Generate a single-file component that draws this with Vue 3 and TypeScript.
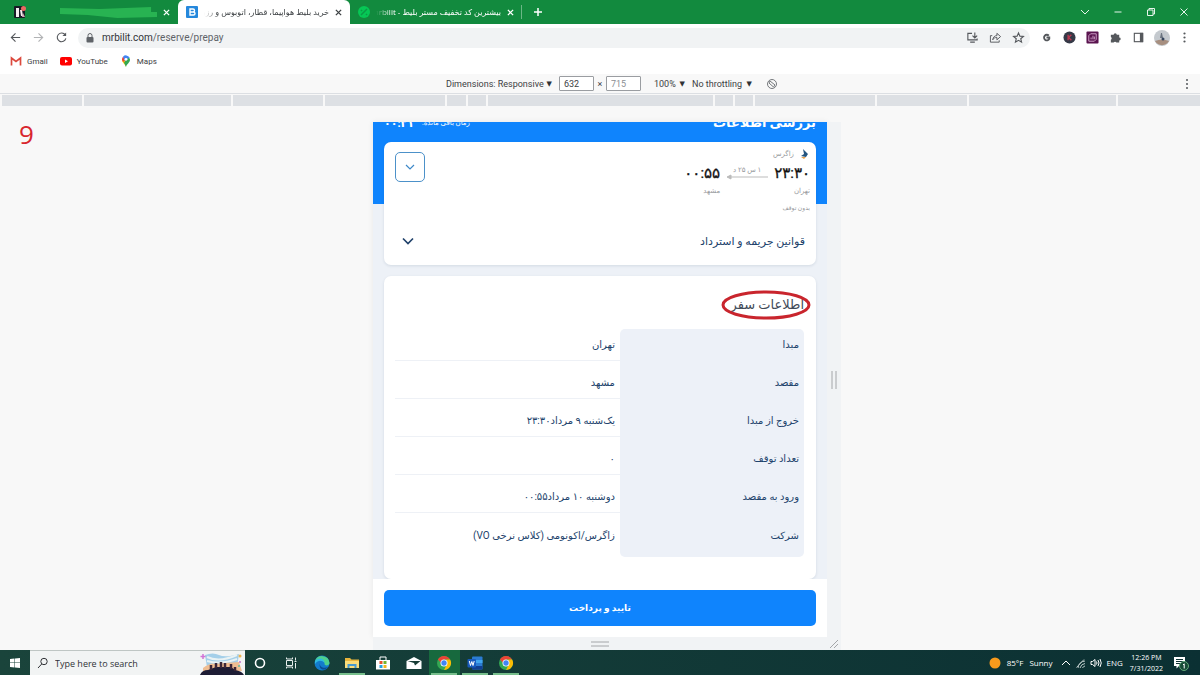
<script setup lang="ts">
import { ref } from 'vue'

interface TripRow {
  label: string
  value: string
}

const rows: TripRow[] = [
  { label: 'مبدا', value: 'تهران' },
  { label: 'مقصد', value: 'مشهد' },
  { label: 'خروج از مبدا', value: 'یک‌شنبه ۹ مرداد۲۳:۳۰' },
  { label: 'تعداد توقف', value: '۰' },
  { label: 'ورود به مقصد', value: 'دوشنبه ۱۰ مرداد۰۰:۵۵' },
  { label: 'شرکت', value: 'زاگرس/اکونومی (کلاس نرخی VO)' },
]

const breakpoints: number[] = [82, 150, 92, 123, 19, 19, 229, 19, 18, 123, 92, 150, 84]

const address = ref('mrbilit.com')
const width = ref('632')
const height = ref('715')
const query = ref('')
</script>

<template>
  <div class="desktop">
    <header class="tabs">
      <div class="tab first">
        <svg class="fav" viewBox="0 0 14 14" aria-hidden="true">
          <rect x="1" y="1" width="11" height="12" rx="1" fill="#171a25" />
          <path d="M3 3h3v9H3zM7 5l2 0 1 6H8z" fill="#f5f0f2" />
          <circle cx="10.500" cy="3.500" r="2.500" fill="#e86b62" />
          <path d="M10 8l2 4H9z" fill="#d4a6b5" />
        </svg>
        <svg class="scribble" viewBox="0 0 100 12" preserveAspectRatio="none" aria-hidden="true">
          <path d="M1 2l40 1 52-2v5h6v5l-40 1-30-3L1 8z" fill="#28b352" />
        </svg>
        <button class="close" aria-label="Close tab">
          <svg viewBox="0 0 8 8"><path d="M1 1l6 6M7 1L1 7" /></svg>
        </button>
      </div>
      <div class="tab active">
        <svg class="fav" viewBox="0 0 14 14" aria-hidden="true">
          <rect x="1" y="1" width="12" height="12" rx="1" fill="#2588dc" />
          <path d="M5 4h3a1.500 1.500 0 0 1 0 3H5zM5 7h3.500a1.500 1.500 0 0 1 0 3H5z" fill="none" stroke="#fff" stroke-width="1.400" />
        </svg>
        <span class="title" dir="rtl">خرید بلیط هواپیما، قطار، اتوبوس و رزرو</span>
        <button class="close" aria-label="Close tab">
          <svg viewBox="0 0 8 8"><path d="M1 1l6 6M7 1L1 7" /></svg>
        </button>
      </div>
      <div class="tab last">
        <svg class="fav" viewBox="0 0 14 14" aria-hidden="true">
          <circle cx="7" cy="7" r="6" fill="#06c755" />
          <path d="M4 10l6-6M4 5l1 1M9 9l1 1" stroke="#0a9a46" stroke-width="1.500" />
        </svg>
        <span class="title" dir="rtl">بیشترین کد تخفیف مستر بلیط - mrbilit</span>
        <button class="close" aria-label="Close tab">
          <svg viewBox="0 0 8 8"><path d="M1 1l6 6M7 1L1 7" /></svg>
        </button>
      </div>
      <button class="new-tab" aria-label="New tab">
        <svg viewBox="0 0 10 10"><path d="M5 1v8M1 5h8" /></svg>
      </button>
      <div class="window-controls">
        <button aria-label="Search tabs"><svg viewBox="0 0 12 12"><path d="M2 4l4 4 4-4" /></svg></button>
        <button aria-label="Minimize"><svg viewBox="0 0 12 12"><path d="M2.500 6h7" /></svg></button>
        <button aria-label="Restore"><svg viewBox="0 0 12 12"><path d="M2.500 4h5.500v5.500H2.500zM4 4V2.500h5.500V8H8" /></svg></button>
        <button aria-label="Close window"><svg viewBox="0 0 12 12"><path d="M2.500 2.500l7 7M9.500 2.500l-7 7" /></svg></button>
      </div>
    </header>

    <nav class="toolbar">
      <button class="tool" aria-label="Back"><svg viewBox="0 0 14 14"><path d="M12 7H2.500M7 2.500L2.500 7 7 11.500" /></svg></button>
      <button class="tool faded" aria-label="Forward"><svg viewBox="0 0 14 14"><path d="M2 7h9.500M7 2.500L11.500 7 7 11.500" /></svg></button>
      <button class="tool" aria-label="Reload"><svg viewBox="0 0 14 14"><path d="M11 4.200A4.700 4.700 0 1 0 11.700 8" /><path d="M12 1.500v4H8z" fill="#55585c" stroke="none" /></svg></button>
      <div class="address">
        <svg class="lock" viewBox="0 0 10 12" aria-hidden="true"><rect x="1.500" y="5" width="7" height="5.500" rx="1" fill="#5f6368" /><path d="M3 5V3.500a2 2 0 0 1 4 0V5" fill="none" stroke="#5f6368" /></svg>
        <a class="url" href="#" :aria-label="address">{{ address }}<span>/reserve/prepay</span></a>
        <button class="tool" aria-label="Install app"><svg viewBox="0 0 14 14"><path d="M6.500 2.500H2v7h10V8M4.500 12h5M9.500 1.500v5.500M7 5l2.500 2.500L12 5" /></svg></button>
        <button class="tool" aria-label="Share"><svg viewBox="0 0 14 14"><path d="M3.500 5H1.500v7h9.500V10M4 9.500c.5-3 2-4.500 4.500-4.500V2.500l4 3.500-4 3.500V7C6.500 7 5 7.500 4 9.500z" stroke-width="1" /></svg></button>
        <button class="tool" aria-label="Bookmark"><svg viewBox="0 0 14 14"><path d="M7 2l1.500 3.500 3.800.300-2.900 2.500.900 3.700L7 10l-3.300 2 .900-3.700-2.900-2.500 3.800-.300z" /></svg></button>
      </div>
      <button class="tool" aria-label="Grammar extension"><svg viewBox="0 0 14 14"><path d="M9.500 5A3 3 0 1 0 10 8.500V7H7" stroke-width="2" /></svg></button>
      <button class="tool" aria-label="Keyword extension"><svg viewBox="0 0 14 14"><circle cx="7" cy="7" r="6.500" fill="#353947" stroke="none" /><path d="M5.500 4v6M9 4L6 7l3 3" stroke="#b93850" stroke-width="1.500" /></svg></button>
      <button class="tool" aria-label="Statistics extension"><svg viewBox="0 0 14 14"><rect x="0.500" y="0.500" width="13" height="13" rx="1" fill="#5a144f" stroke="none" /><path d="M3 11V5l2-2h6v6l-2 2zM5.500 9V7M7.500 9V5M9 9V6" stroke="#d5a9ce" stroke-width="1" /></svg></button>
      <button class="tool" aria-label="Extensions"><svg viewBox="0 0 14 14"><path d="M2 4h3a1.700 1.700 0 1 1 3.400 0H11v3a1.600 1.600 0 1 1 0 3.200V12.500H8a1.700 1.700 0 0 0-3 0H2V9.500a1.700 1.700 0 0 0 0-3z" fill="#55585c" stroke="none" /></svg></button>
      <button class="tool" aria-label="Side panel"><svg viewBox="0 0 14 14"><rect x="2.500" y="2.500" width="9" height="9" /><path d="M8.500 2h3.500v10H8.500z" fill="#55585c" stroke="none" /></svg></button>
      <button class="tool" aria-label="Profile"><svg class="avatar" viewBox="0 0 16 16"><circle cx="8" cy="8" r="8" fill="#c4c9ce" /><path d="M1 11q7-3 14 0a8 8 0 0 1-14 0z" fill="#a78f80" /><path d="M7 3h1l1 5H6z" fill="#6b7480" /><circle cx="9" cy="9" r="1.500" fill="#34445c" /></svg></button>
      <button class="tool" aria-label="Chrome menu"><svg viewBox="0 0 14 14"><g fill="#55585c" stroke="none"><circle cx="7" cy="2.700" r="1.200" /><circle cx="7" cy="7" r="1.200" /><circle cx="7" cy="11.300" r="1.200" /></g></svg></button>
    </nav>

    <nav class="bookmarks">
      <a href="#"><svg viewBox="0 0 12 12" aria-hidden="true"><path d="M1.500 10.500V3L6 6.500 10.500 3v7.500" fill="none" stroke="#dc4a3e" stroke-width="1.700" /></svg>Gmail</a>
      <a href="#"><svg viewBox="0 0 12 12" aria-hidden="true"><rect y="2" width="12" height="8.500" rx="2" fill="#f00" /><path d="M5 4.500v3.500l3-1.700z" fill="#fff" /></svg>YouTube</a>
      <a href="#"><svg viewBox="0 0 12 12" aria-hidden="true"><path d="M6 12C5.500 9 2 8 2 4.500L6 4z" fill="#fbbc04" /><path d="M6 12c.500-3 4-4 4-7.500L9 2 4 7.500z" fill="#34a853" /><path d="M2 4.500a4 4 0 0 1 1-2.800L6 4 3 7z" fill="#ea4335" /><path d="M3 1.700A4 4 0 0 1 9.500 2.500L5 6z" fill="#4285f4" /><circle cx="6" cy="4.300" r="1.400" fill="#fff" /></svg>Maps</a>
    </nav>

    <section class="device-bar">
      <div class="device-controls">
        <label class="pick dimensions"><select aria-label="Dimensions"><option>Dimensions: Responsive</option></select><i>▼</i></label>
        <input v-model="width" aria-label="Width" />
        <span class="times">×</span>
        <input v-model="height" class="muted" aria-label="Height" />
        <label class="pick zoom"><select aria-label="Zoom"><option>100%</option></select><i>▼</i></label>
        <label class="pick throttle"><select aria-label="Throttling"><option>No throttling</option></select><i>▼</i></label>
        <button aria-label="Rotate"><svg viewBox="0 0 12 12"><circle cx="6" cy="6" r="4.500" /><path d="M4 3l5 4-1.500 2L3 5z" /></svg></button>
      </div>
      <button class="more" aria-label="More options"><svg viewBox="0 0 12 12"><g fill="#55585c" stroke="none"><circle cx="6" cy="2" r="1" /><circle cx="6" cy="6" r="1" /><circle cx="6" cy="10" r="1" /></g></svg></button>
    </section>

    <div class="ruler"><span v-for="(size, i) in breakpoints" :key="i" :style="{ flexGrow: size }"></span></div>

    <main class="stage">
      <div class="step">9</div>
      <div class="device" dir="rtl">
        <div class="screen">
          <div class="page-head">
            <h1>بررسی اطلاعات</h1>
            <p>زمان باقی مانده: <b>۰۰:۲۱</b></p>
          </div>
          <section class="card flight">
            <div class="flight-top">
              <div>
                <div class="airline">
                  <svg viewBox="0 0 12 12" aria-hidden="true"><path d="M5 1l5 5-2 3-5-1 3-2z" fill="#245580" /><path d="M3 9h5l-2 2z" fill="#e5a04a" /></svg>
                  زاگرس
                </div>
                <div class="route">
                  <time>۲۳:۳۰</time>
                  <div class="duration">
                    <span>۱ س ۲۵ د</span>
                    <svg viewBox="0 0 42 6" aria-hidden="true"><path d="M42 2H2M5 0L1 2l4 2z" /></svg>
                  </div>
                  <time>۰۰:۵۵</time>
                  <span class="city">تهران</span>
                  <span></span>
                  <span class="city">مشهد</span>
                </div>
                <div class="stops">بدون توقف</div>
              </div>
              <button class="toggle" aria-label="جزئیات"><svg viewBox="0 0 12 12"><path d="M2 4l4 4 4-4" /></svg></button>
            </div>
            <button class="rules">قوانین جریمه و استرداد
              <svg viewBox="0 0 12 12" aria-hidden="true"><path d="M1 3.500l5 5 5-5" /></svg>
            </button>
          </section>
          <section class="card trip">
            <h2>
              اطلاعات سفر
              <svg class="mark" viewBox="0 0 90 30" aria-hidden="true"><ellipse cx="45" cy="15" rx="43" ry="13" /></svg>
            </h2>
            <table>
              <tbody>
                <tr v-for="row in rows" :key="row.label">
                  <th scope="row">{{ row.label }}</th>
                  <td>{{ row.value }}</td>
                </tr>
              </tbody>
            </table>
          </section>
        </div>
        <div class="pay"><button>تایید و پرداخت</button></div>
      </div>
      <div class="grip-side"><svg viewBox="0 0 6 20" aria-hidden="true"><path d="M1 1v18M5 1v18" /></svg></div>
      <div class="grip-bottom">
        <svg viewBox="0 0 20 6" aria-hidden="true"><path d="M1 1h18M1 5h18" /></svg>
      </div>
      <div class="grip-corner">
        <svg viewBox="0 0 10 10" aria-hidden="true"><path d="M1 9l8-8M5 9l4-4" /></svg>
      </div>
    </main>

    <footer class="taskbar">
      <button class="start" aria-label="Start"><svg viewBox="0 0 12 12"><path d="M1 2l4.500-.500v4H1zM6 1.400L11 1v4.500H6zM1 6h4.500v4.500L1 10zM6 6h5v5l-5-.500z" fill="#fff" /></svg></button>
      <label class="search">
        <svg class="glass" viewBox="0 0 12 12" aria-hidden="true"><circle cx="7" cy="4.500" r="3.200" /><path d="M4.700 7L1 11" /></svg>
        <input v-model="query" placeholder="Type here to search" aria-label="Search" />
        <svg class="scene" viewBox="0 0 46 24" aria-hidden="true">
          <path d="M6 4q8-3 14 0t20-1l-2 13H8z" fill="#a4cfe9" />
          <path d="M8 6q12 6 30-2M8 10q14 4 30-2" fill="none" stroke="#e9f2f4" stroke-width="2" />
          <path d="M4 17q8-6 12-4l10-1 14-1 3 9H4z" fill="#efbd92" />
          <path d="M1 24q2-5 8-5l8-3h15l4 3q7 1 9 5z" fill="#1e1d35" />
          <path d="M12 19v-5M17 17v-5M22 17v-6M26 17v-5M32 18v-5M36 20v-4" stroke="#3b2638" stroke-width="2.500" />
          <path d="M4 3v5M1.500 5.500h5" stroke="#d274d6" stroke-width="1.500" />
          <circle cx="41" cy="5" r="1.500" fill="#ecb351" /><circle cx="41" cy="11" r="1" fill="#c274cf" /><circle cx="40" cy="15" r="1" fill="#58b8a2" />
        </svg>
      </label>
      <div class="apps">
        <button aria-label="Cortana"><svg viewBox="0 0 16 16"><circle cx="8" cy="8" r="4.500" fill="none" stroke="#fff" stroke-width="1.600" /></svg></button>
        <button aria-label="Task view"><svg viewBox="0 0 16 16"><path d="M3.500 5.500h6v5h-6zM3.500 2.500v1.500h6V2.500M3.500 13.500V12h6v1.500M12.500 2.500v3M12.500 8v5.500M11.500 6.500h2" fill="none" stroke="#e8efed" /></svg></button>
        <button aria-label="Edge"><svg viewBox="0 0 16 16"><circle cx="8" cy="8" r="7.500" fill="#137bcc" /><path d="M1 6a7.500 7.500 0 0 1 14.500 2c0 3-5 3-5 1 1-3-5-5-9.500-3z" fill="#4ed08c" /><path d="M1 6c4-5 10-2 9.500 2C8 5 4 5 1 9z" fill="#2fbae0" /><path d="M6 8c-1 4 4 6 8 4-4 5-10 2-8-4z" fill="#0b4b94" /></svg></button>
        <button class="open" aria-label="File Explorer"><svg viewBox="0 0 16 16"><path d="M1 3h5l1.500 1.500H15V13H1z" fill="#e8b53c" /><path d="M1 6h14v7H1z" fill="#f9dc79" /><path d="M3.500 9h9v4h-2v-2h-5v2h-2z" fill="#4799cf" /></svg></button>
        <button aria-label="Microsoft Store"><svg viewBox="0 0 16 16"><path d="M5 5V2h6v3" fill="none" stroke="#fff" /><path d="M1 5h14v9.500H1z" fill="#fff" /><path d="M4.500 6h3v3h-3z" fill="#e5532d" /><path d="M8.500 6h3v3h-3z" fill="#73b32e" /><path d="M4.500 10h3v3h-3z" fill="#24a1df" /><path d="M8.500 10h3v3h-3z" fill="#f5b51d" /></svg></button>
        <button aria-label="Mail"><svg viewBox="0 0 16 16"><path d="M0.500 6L8 2l7.500 4v8H0.500z" fill="#fff" /><path d="M1.500 6h13L9 10.500 8 8z" fill="#173c36" /></svg></button>
        <button class="open current" aria-label="Chrome"><svg viewBox="0 0 16 16"><circle cx="8" cy="8" r="7" fill="#34a853" /><path d="M1.900 4.500A7 7 0 0 1 14.100 4.500H8L6 9z" fill="#ea4335" /><path d="M14.100 4.500A7 7 0 0 1 8 15l3-6-1-4.500z" fill="#fbbc04" /><circle cx="8" cy="8" r="3.500" fill="#fff" /><circle cx="8" cy="8" r="2.700" fill="#4285f4" /></svg></button>
        <button class="open" aria-label="Word"><svg viewBox="0 0 16 16"><rect x="5" y="1.500" width="10.500" height="13" rx="1" fill="#2b7cd3" /><path d="M5 5h10.500v3H5z" fill="#41a5ee" /><path d="M5 11h10.500v3.500H5z" fill="#103f91" /><rect x="0.500" y="4" width="8.500" height="8.500" rx="1" fill="#185abd" /><path d="M2.300 6l1.200 4.500L4.800 6.500l1.200 4L7.200 6" fill="none" stroke="#fff" /></svg></button>
        <button class="open" aria-label="Chrome window"><svg viewBox="0 0 16 16"><circle cx="8" cy="8" r="7" fill="#34a853" /><path d="M1.900 4.500A7 7 0 0 1 14.100 4.500H8L6 9z" fill="#ea4335" /><path d="M14.100 4.500A7 7 0 0 1 8 15l3-6-1-4.500z" fill="#fbbc04" /><circle cx="8" cy="8" r="3.500" fill="#fff" /><circle cx="8" cy="8" r="2.700" fill="#4285f4" /></svg></button>
      </div>
      <div class="tray">
        <button class="weather"><svg viewBox="0 0 12 12" aria-hidden="true"><circle cx="6" cy="6" r="5.500" fill="#f79a1c" /></svg><span>85°F</span><span>Sunny</span></button>
        <button class="small" aria-label="Hidden icons"><svg viewBox="0 0 12 12"><path d="M2 8l4-4 4 4" /></svg></button>
        <button class="small" aria-label="Network"><svg viewBox="0 0 12 12"><path d="M3 11a8 8 0 0 1 7-7M5 11a6 6 0 0 1 5-4.500M7.500 11A3.500 3.500 0 0 1 10 9M1.500 10.500L9 2.500" stroke="#b9c7c6" /></svg></button>
        <button class="small" aria-label="Volume"><svg viewBox="0 0 12 12"><path d="M1 4.500h1.500L5 2.500v7l-2.500-2H1zM6.500 4.500q1 1.500 0 3M8 3q2 3 0 6M10 2q2.500 4 0 8" /></svg></button>
        <span class="lang">ENG</span>
        <time class="clock">12:26 PM<br />7/31/2022</time>
        <button class="notes" aria-label="Notifications"><svg viewBox="0 0 16 16"><path d="M1 2h11v9H6l-2.500 2.500V11H1z" fill="#fff" stroke="none" /><path d="M3 4.500h7M3 6.500h7M3 8.500h5" stroke="#0f3334" /><circle cx="11" cy="11" r="4.500" fill="#174b36" stroke="#61a878" /><path d="M10 10l1.200-1.200V13.500" stroke="#fff" /></svg></button>
      </div>
    </footer>
  </div>
</template>

<style>
body {
  margin: 0;
}
</style>

<style scoped>
.desktop {
  display: flex;
  flex-direction: column;
  min-height: 100vh;
  background: #f8f8f8;
  color: #3c4043;
  font-family: "Open Sans", "DejaVu Sans", sans-serif;
  font-size: 8px;
}
.desktop * {
  box-sizing: border-box;
}
button,
input,
select {
  margin: 0;
  padding: 0;
  border: 0;
  background: none;
  color: inherit;
  font: inherit;
}
button {
  display: flex;
  align-items: center;
  justify-content: center;
}
svg {
  display: block;
  flex: none;
  overflow: visible;
}
a {
  color: inherit;
  text-decoration: none;
}

.tabs {
  display: flex;
  height: 24px;
  background: #128a3e;
  color: #fff;
}
.tab {
  display: flex;
  align-items: center;
  width: 171px;
  padding: 0 7px;
  gap: 5px;
}
.tab.first {
  width: 178px;
  padding: 0 8px 0 13px;
  gap: 0;
}
.tab.active {
  width: 172px;
  padding-right: 8px;
  background: #fff;
  color: #3c4043;
  border-radius: 6px 6px 0 0;
}
.fav {
  width: 14px;
  height: 14px;
}
.scribble {
  width: 99px;
  height: 12px;
  margin: 0 4px 0 auto;
}
.title {
  flex: 1;
  min-width: 0;
  overflow: hidden;
  white-space: nowrap;
  line-height: 16px;
  mask-image: linear-gradient(to right, transparent, #000 14px);
}
.close {
  width: 8px;
  height: 16px;
}
.close svg {
  width: 7px;
  height: 7px;
}
.close svg,
.new-tab svg {
  fill: none;
  stroke: currentColor;
  stroke-width: 1.500;
}
.new-tab {
  width: 32px;
  border-left: 1px solid #6bb786;
  height: 14px;
  margin: auto 0;
}
.new-tab svg {
  width: 10px;
  height: 10px;
}
.window-controls {
  display: flex;
  align-items: center;
  margin-left: auto;
}
.window-controls button {
  width: 33px;
  height: 22px;
}
.window-controls svg {
  width: 12px;
  height: 12px;
  fill: none;
  stroke: #e6f4eb;
}

.toolbar {
  display: flex;
  align-items: center;
  height: 27px;
  padding: 0 4px;
  background: #fff;
}
.tool {
  width: 23px;
  height: 20px;
}
.tool svg {
  width: 13px;
  height: 13px;
  fill: none;
  stroke: #55585c;
  stroke-width: 1.200;
}
.tool .avatar {
  width: 16px;
  height: 16px;
  stroke: none;
}
.faded {
  opacity: 0.45;
}
.address {
  display: flex;
  flex: 1;
  align-items: center;
  height: 20px;
  margin: 0 5px;
  padding-left: 7px;
  border-radius: 10px;
  background: #f1f3f4;
}
.lock {
  width: 10px;
  height: 12px;
}
.url {
  flex: 1;
  margin-left: 7px;
  color: #303236;
  font-family: Roboto, sans-serif;
  font-size: 10px;
  line-height: 16px;
}
.url span {
  color: #5f6368;
}

.bookmarks {
  display: flex;
  gap: 12px;
  height: 23px;
  padding: 0 10px;
  background: #fff;
  font-family: Roboto, sans-serif;
}
.bookmarks a {
  display: flex;
  align-items: center;
  height: 20px;
  gap: 5px;
}
.bookmarks svg {
  width: 12px;
  height: 12px;
}

.device-bar {
  display: grid;
  grid-template-columns: 446fr auto 422fr;
  align-items: center;
  height: 19px;
}
.device-controls {
  display: flex;
  grid-column: 2;
  align-items: center;
  font-family: Roboto, sans-serif;
  font-size: 9px;
}
.pick {
  display: flex;
  align-items: center;
}
.pick select {
  flex: 1;
  min-width: 0;
  appearance: none;
}
.pick i {
  color: #303236;
  font-family: "DejaVu Sans", sans-serif;
  font-size: 7px;
  font-style: normal;
}
.dimensions {
  width: 106px;
  margin-right: 7px;
}
.zoom {
  width: 31px;
  margin: 0 7px 0 13px;
}
.throttle {
  width: 60px;
}
.device-controls input {
  width: 35px;
  height: 15px;
  padding: 0 4px;
  border: 1px solid #9a9da1;
  border-radius: 1px;
  background: #fff;
}
.device-controls .muted {
  color: #8b8e92;
}
.times {
  width: 12px;
  text-align: center;
}
.device-controls button {
  margin-left: 14px;
}
.device-bar svg {
  width: 12px;
  height: 12px;
  fill: none;
  stroke: #75787c;
}
.more {
  justify-self: end;
  margin-right: 7px;
}
.ruler {
  display: flex;
  height: 13px;
  padding: 1px 0 0;
  border-top: 1px solid #dcdfe3;
}
.ruler span {
  flex-basis: 0;
  border-left: 2px solid #f8f8f8;
  background: #dde0e4;
}

.stage {
  display: grid;
  position: relative;
  flex: 1;
  grid-template-columns: minmax(0, 373fr) minmax(0, 454fr) 14px minmax(0, 359fr);
  grid-template-rows: 1fr 13px;
  padding-top: 16px;
}
.step {
  position: absolute;
  top: 10px;
  left: 19px;
  color: #d8262e;
  font-size: 26px;
  line-height: 36px;
}
.device {
  display: flex;
  grid-column: 2;
  flex-direction: column;
  overflow: hidden;
  background: #fff;
  color: #21426b;
  font-family: Roboto, "DejaVu Sans", sans-serif;
  font-size: 10px;
  box-shadow: 0 0 6px #00000012;
}
.screen {
  flex: 1;
  overflow: hidden;
  padding: 0 11px;
  background: linear-gradient(#0f84fd 82px, #edf1f7 0);
}
.page-head {
  display: flex;
  align-items: center;
  justify-content: space-between;
  height: 30px;
  margin-top: -14px;
  margin-bottom: 4px;
  color: #fff;
}
h1 {
  margin: 0;
  font-size: 13px;
  line-height: 30px;
}
.page-head p {
  display: flex;
  align-items: center;
  gap: 8px;
  margin: 0;
  font-size: 7px;
}
.page-head b {
  font-size: 11px;
}
.card {
  border-radius: 7px;
  background: #fff;
  box-shadow: 0 1px 3px #20406020;
}
.flight {
  margin-bottom: 11px;
}
.flight-top {
  display: flex;
  justify-content: space-between;
  padding: 5px 6px 3px 11px;
}
.airline {
  display: flex;
  align-items: center;
  gap: 4px;
  height: 14px;
  color: #96989c;
  font-size: 7px;
}
.airline svg {
  width: 12px;
  height: 12px;
}
.route {
  display: grid;
  grid-template-columns: auto 42px auto;
  align-items: center;
  column-gap: 6px;
  grid-template-rows: 24px 11px;
}
.route time {
  color: #111;
  font-size: 15px;
  line-height: 24px;
  -webkit-text-stroke: 0.3px #111;
}
.duration {
  color: #96989c;
  font-size: 7px;
  line-height: 9px;
  text-align: center;
}
.duration svg {
  width: 42px;
  height: 6px;
  fill: #bbb;
  stroke: #bbb;
}
.city {
  color: #96989c;
  font-size: 7px;
}
.stops {
  margin-top: 6px;
  color: #96989c;
  font-size: 6px;
  line-height: 12px;
}
.toggle {
  width: 30px;
  height: 30px;
  margin-top: 5px;
  border: 1px solid #4c91c9;
  border-radius: 5px;
}
.toggle svg {
  width: 12px;
  height: 12px;
  fill: none;
  stroke: #3d88c8;
  stroke-width: 1.200;
}
.rules {
  justify-content: space-between;
  width: 100%;
  height: 48px;
  padding: 0 11px 0 18px;
  font-size: 11px;
}
.rules svg {
  width: 12px;
  height: 12px;
  fill: none;
  stroke: #21426b;
  stroke-width: 1.700;
}
.trip {
  padding: 11px 12px 22px 11px;
}
h2 {
  position: relative;
  width: fit-content;
  margin: 0 0 6px;
  color: #3f4a58;
  font-size: 13px;
  font-weight: 400;
  line-height: 36px;
}
.mark {
  position: absolute;
  inset: 3px -7px auto -8px;
  width: 90px;
  height: 30px;
  fill: none;
  stroke: #c9252d;
  stroke-width: 3;
}
table {
  width: 100%;
  border-spacing: 0;
  table-layout: fixed;
}
th,
td {
  height: 38px;
  padding: 6px 5px 0;
  border-bottom: 1px solid #eef1f6;
  font-weight: 400;
  text-align: right;
}
th {
  width: 45%;
  border-color: #edf1f8;
  background: #edf1f8;
}
tr:first-child > * {
  height: 32px;
  padding-top: 0;
}
tr:last-child > * {
  height: 44px;
  padding-top: 0;
  border-bottom: 0;
}
tr:first-child th {
  border-radius: 5px 5px 0 0;
}
tr:last-child th {
  border-radius: 0 0 5px 5px;
}
.pay {
  padding: 11px;
}
.pay button {
  width: 100%;
  height: 36px;
  border-radius: 5px;
  background: #0f84fd;
  color: #fff;
  font-size: 9px;
  font-weight: 700;
}
.grip-side,
.grip-bottom,
.grip-corner {
  display: flex;
  align-items: center;
  justify-content: center;
  background: #f1f3f5;
}
.grip-side svg {
  width: 6px;
  height: 20px;
}
.grip-bottom {
  grid-row: 2;
  grid-column: 2;
}
.grip-bottom svg {
  width: 20px;
  height: 6px;
}
.grip-corner {
  grid-row: 2;
  grid-column: 3;
}
.grip-corner svg {
  width: 10px;
  height: 10px;
}
.grip-side svg,
.grip-bottom svg,
.grip-corner svg {
  stroke: #a4a6a9;
}

.taskbar {
  display: flex;
  height: 25px;
  background: linear-gradient(90deg, #1a443b, #0b3033);
  color: #fff;
}
.start {
  width: 30px;
}
.start svg {
  width: 12px;
  height: 12px;
}
.search {
  display: flex;
  align-items: center;
  width: 215px;
  padding-left: 7px;
  border-top: 1px solid #bfc6c4;
  background: #f2f4f4;
  color: #303236;
}
.search input {
  flex: 1;
  min-width: 0;
  margin-left: 6px;
  font-size: 9px;
}
.search input::placeholder {
  color: #303236;
  opacity: 1;
}
.glass {
  width: 12px;
  height: 12px;
  fill: none;
  stroke: #303236;
}
.scene {
  width: 46px;
  height: 24px;
}
.apps {
  display: flex;
  width: 276px;
}
.apps button {
  flex: 1;
}
.apps svg {
  width: 16px;
  height: 16px;
}
.apps .open {
  background: linear-gradient(#77bf8c, #77bf8c) center bottom / 26px 2px no-repeat;
}
.apps .current {
  background-color: #17693e;
}
.tray {
  display: flex;
  align-items: center;
  margin-left: auto;
  padding-right: 11px;
  font-size: 8px;
}
.tray svg {
  width: 12px;
  height: 12px;
  fill: none;
  stroke: #fff;
}
.weather {
  gap: 6px;
  margin-right: 6px;
}
.tray .weather svg {
  stroke: none;
}
.small {
  width: 15px;
}
.lang {
  margin: 0 7px 0 3px;
}
.clock {
  font-size: 7px;
  line-height: 11px;
  text-align: center;
}
.notes {
  margin-left: 10px;
}
.tray .notes svg {
  width: 16px;
  height: 16px;
}
</style>
